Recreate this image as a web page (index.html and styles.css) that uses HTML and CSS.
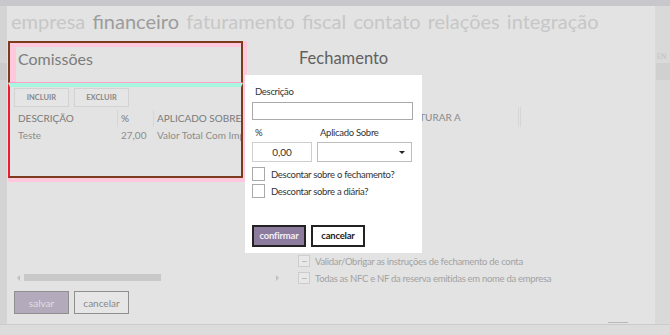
FILE: index.html
```html
<!DOCTYPE html>
<html>
<head>
	<title>Configurações</title>
	<link rel="stylesheet" href="styles.css">
</head>
<body>
	<div class="screen">
		<div class="topbar"></div>
		<div class="middle">
			<div class="edge-left">
				<div class="ghost-band"></div>
			</div>

			<div class="panel">
				<div class="tabs">
					<span>empresa</span>
					<span class="active">financeiro</span>
					<span>faturamento</span>
					<span>fiscal</span>
					<span>contato</span>
					<span>relações</span>
					<span>integração</span>
				</div>

				<div class="panel-body">
					<div class="col-left">
						<div class="selected">
							<div class="box-head"><div class="head-inner">Comissões</div></div>
							<div class="box-main">
								<div class="actions">
									<button type="button" class="small-btn">INCLUIR</button>
									<button type="button" class="small-btn">EXCLUIR</button>
								</div>
								<div class="grid-table">
									<div class="grid-row head">
										<div class="c1">DESCRIÇÃO</div>
										<div class="c2">%</div>
										<div class="c3">APLICADO SOBRE</div>
									</div>
									<div class="grid-row">
										<div class="c1">Teste</div>
										<div class="c2">27,00</div>
										<div class="c3">Valor Total Com Impo</div>
									</div>
								</div>
							</div>
						</div>
						<div class="pink-under"></div>

						<div class="hscroll">
							<span class="arrow left"></span>
							<div class="track"><div class="thumb"></div></div>
							<span class="arrow right"></span>
						</div>
						<div class="footer-btns">
							<button type="button" class="btn-save">salvar</button>
							<button type="button" class="btn-cancel">cancelar</button>
						</div>
					</div>

					<div class="col-right">
						<div class="section-title">Fechamento</div>
						<div class="right-head">
							<div class="rc1">CÓDIGO</div>
							<div class="rc2">FATURAR A</div>
						</div>
						<div class="checklist">
							<label class="check-line"><span class="dash-box"></span>Validar/Obrigar as instruções de fechamento de conta</label>
							<label class="check-line"><span class="dash-box"></span>Todas as NFC e NF da reserva emitidas em nome da empresa</label>
						</div>
					</div>
				</div>

				<div class="modal">
					<div class="field-label">Descrição</div>
					<input type="text" class="field wide">
					<div class="field-row labels">
						<div class="lbl-pct">%</div>
						<div>Aplicado Sobre</div>
					</div>
					<div class="field-row">
						<input type="text" class="field pct" value="0,00">
						<div class="field select"><span class="caret"></span></div>
					</div>
					<label class="opt"><span class="box"></span>Descontar sobre o fechamento?</label>
					<label class="opt"><span class="box"></span>Descontar sobre a diária?</label>
					<div class="modal-btns">
						<button type="button" class="btn-confirm">confirmar</button>
						<button type="button" class="btn-plain">cancelar</button>
					</div>
				</div>
			</div>

			<div class="edge-right">
				<span class="ghost">EN</span>
				<div class="ghost-band"></div>
			</div>
		</div>
		<div class="bottombar"><div class="bottom-mark"></div></div>
	</div>
</body>
</html>
```

FILE: styles.css
```css
body{
	margin: 0;
	padding: 0;
	font-family: 'Lato', 'Open Sans', sans-serif;
	background: #d6d6d6;
	overflow: hidden;
}
.screen{
	width: 670px;
	height: 335px;
	display: flex;
	flex-direction: column;
}
.topbar{
	height: 6px;
	background: #c8c7cb;
}
.middle{
	height: 319px;
	display: flex;
}
.edge-left{
	width: 7px;
	background: #d4d4d4;
	overflow: hidden;
}
.edge-right{
	width: 15px;
	background: #d9d9d9;
	overflow: hidden;
	padding-top: 46px;
	box-sizing: border-box;
}
.ghost{
	display: block;
	font-size: 7px;
	line-height: 8px;
	color: #c4c4c4;
	padding-left: 2px;
}
.edge-left .ghost-band{
	margin-top: 57px;
	height: 17px;
	background: #cbcbcb;
}
.edge-right .ghost-band{
	margin-top: 3px;
	height: 17px;
	margin-left: 1px;
	background: #d0d0d0;
}

.panel{
	width: 648px;
	background: #e3e3e3;
	position: relative;
	display: flex;
	flex-direction: column;
}
.tabs{
	height: 35px;
	box-sizing: border-box;
	padding: 1px 0 0 4px;
	font-size: 20px;
	line-height: 28px;
	color: #c7c7c7;
	white-space: nowrap;
}
.tabs span{
	margin-right: 2px;
}
.tabs .active{
	color: #9c9c9c;
}
.panel-body{
	flex: 1;
	display: grid;
	grid-template-columns: 272px 1fr;
}

/* left column */
.col-left{
	display: flex;
	flex-direction: column;
	padding-left: 1px;
	padding-bottom: 10px;
}
.selected{
	width: 235px;
	height: 137px;
	display: flex;
	flex-direction: column;
	box-shadow: 4px 0 0 #ffc8dc;
}
.box-head{
	height: 39px;
	border: 2px solid #7b3b1d;
	border-bottom: 1px solid #ff9ecb;
}
.head-inner{
	height: 35px;
	border-top: 4px solid #ffc8dc;
	border-left: 6px solid #ffc8dc;
	padding-left: 2px;
	font-size: 16px;
	line-height: 24px;
	color: #7c7c7c;
}
.box-main{
	flex: 1;
	border-top: 4px solid #aaf5dd;
	border-left: 2px solid #ee1c2f;
	border-right: 2px solid #7b3b1d;
	border-bottom: 2px solid #7b3b1d;
	padding: 1px 0 0 4px;
	overflow: hidden;
}
.actions{
	display: flex;
	gap: 5px;
}
.small-btn{
	width: 55px;
	height: 19px;
	padding: 0;
	border: 1px solid #d2d2d2;
	background: #e5e5e5;
	font-family: inherit;
	font-size: 7.5px;
	font-weight: bold;
	color: #888;
}
.grid-table{
	margin-top: 3px;
	font-size: 10px;
	color: #7a7a7a;
	white-space: nowrap;
}
.grid-row{
	display: flex;
	height: 17px;
	line-height: 17px;
}
.grid-row.head .c1,
.grid-row.head .c2{
	border-right: 1px solid #d6d6d6;
}
.grid-row + .grid-row{
	color: #8c8c8c;
}
.grid-row + .grid-row .c1,
.grid-row + .grid-row .c2{
	border-right: 1px solid transparent;
}
.c1{
	flex-shrink: 0;
	width: 99px;
	padding-left: 4px;
}
.c2{
	flex-shrink: 0;
	width: 32px;
	padding-left: 3px;
}
.c3{
	padding-left: 3px;
}
.pink-under{
	width: 240px;
	height: 4px;
	background: #ffc8dc;
}
.hscroll{
	margin-top: auto;
	margin-left: 9px;
	width: 262px;
	height: 7px;
	display: flex;
	align-items: center;
	gap: 4px;
}
.arrow{
	width: 0;
	height: 0;
	border-top: 3px solid transparent;
	border-bottom: 3px solid transparent;
}
.arrow.left{
	border-right: 3px solid #c0c0c0;
}
.arrow.right{
	border-left: 3px solid #c0c0c0;
}
.track{
	flex: 1;
	height: 7px;
}
.thumb{
	width: 137px;
	height: 7px;
	background: #c9c9c9;
}
.footer-btns{
	display: flex;
	gap: 5px;
	margin: 10px 0 0 6px;
}
.btn-save,
.btn-cancel{
	width: 55px;
	height: 23px;
	padding: 0;
	font-family: inherit;
	font-size: 10px;
	border: 1.5px solid #8f8f8f;
}
.btn-save{
	background: #b3aabb;
	color: #e2dde7;
}
.btn-cancel{
	background: #e6e6e6;
	color: #888;
}

/* right column */
.col-right{
	display: flex;
	flex-direction: column;
	padding: 5px 0 40px 20px;
}
.section-title{
	font-size: 16.5px;
	line-height: 24px;
	color: #606060;
}
.right-head{
	display: flex;
	margin-top: 37px;
	height: 20px;
	line-height: 20px;
	font-size: 10px;
	color: #8a8a8a;
}
.rc1{
	width: 109px;
}
.rc2{
	width: 110px;
	border-right: 3px double #d6d6d6;
}
.checklist{
	margin-top: auto;
	display: flex;
	flex-direction: column;
	gap: 5px;
}
.check-line{
	display: flex;
	align-items: center;
	gap: 5px;
	font-size: 9.5px;
	letter-spacing: -0.3px;
	color: #a2a2a2;
	height: 12px;
}
.dash-box{
	width: 10px;
	height: 10px;
	border: 1px solid #cdcdcd;
	background: #e8e8e8;
	margin-left: -1px;
	display: flex;
	align-items: center;
	justify-content: center;
}
.dash-box::before{
	content: "";
	width: 5px;
	height: 1px;
	background: #bdbdbd;
}

/* modal */
.modal{
	position: absolute;
	left: 238px;
	top: 69px;
	width: 177px;
	height: 178px;
	box-sizing: border-box;
	background: #fff;
	padding: 11px 0 0 7px;
	font-size: 9.5px;
	letter-spacing: -0.3px;
	color: #333;
}
.field-label{
	padding-left: 3px;
	height: 16px;
	line-height: 12px;
}
.field{
	box-sizing: border-box;
	border: 1px solid #a9a9a9;
	background: #fff;
	font-family: inherit;
	font-size: 10px;
	color: #333;
	margin: 0;
	outline: none;
	display: block;
}
.field.wide{
	width: 161px;
	height: 18px;
}
.field-row{
	display: flex;
	gap: 5px;
}
.field-row.labels{
	margin-top: 7px;
	height: 15px;
	line-height: 12px;
}
.lbl-pct{
	width: 60px;
	padding-left: 3px;
}
.field.pct{
	width: 60px;
	height: 20px;
	text-align: center;
	border-color: #cfcfcf;
}
.field.select{
	width: 95px;
	height: 20px;
	position: relative;
	border-color: #bdbdbd;
}
.caret{
	position: absolute;
	right: 6px;
	top: 8px;
	border-left: 3px solid transparent;
	border-right: 3px solid transparent;
	border-top: 3px solid #222;
}
.opt{
	display: flex;
	align-items: center;
	gap: 6px;
	margin-top: 6px;
	height: 13px;
}
.opt + .opt{
	margin-top: 4px;
}
.opt .box{
	width: 11px;
	height: 12px;
	border: 1px solid #a9a9a9;
	background: #fff;
}
.modal-btns{
	display: flex;
	gap: 5px;
	margin-top: 27px;
}
.btn-confirm,
.btn-plain{
	width: 54px;
	height: 22px;
	padding: 0;
	border: 2px solid #222;
	font-family: inherit;
	font-size: 9.5px;
	font-weight: bold;
	letter-spacing: -0.2px;
}
.btn-confirm{
	background: #8c7b9d;
	color: #f2eff5;
}
.btn-plain{
	background: #fff;
	color: #222;
}

.bottombar{
	height: 10px;
	border-top: 1px solid #cbcbcb;
	background: #dcdcdc;
	position: relative;
}
.bottom-mark{
	position: absolute;
	left: 608px;
	top: -3px;
	width: 20px;
	height: 1px;
	background: #b8b8b8;
}
```
